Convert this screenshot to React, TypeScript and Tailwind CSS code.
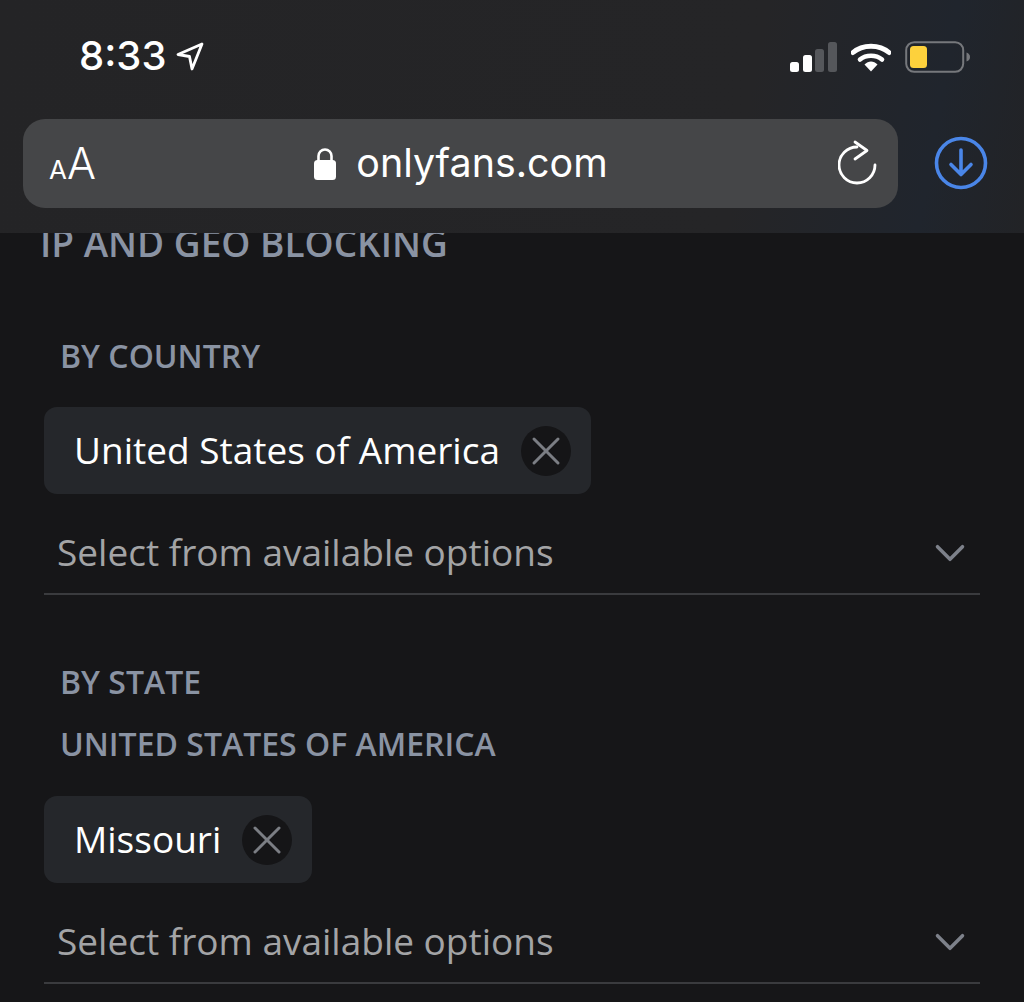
import { ChevronDown, X } from "lucide-react";

const openSans = "font-['Open_Sans',sans-serif]";

function Chip({ label }: { label: string }) {
  return (
    <div className="flex h-[87px] w-fit items-center rounded-[13px] bg-[#25272b] pl-[30px] pr-[20px]">
      <span className="pb-[2px] text-[37px] leading-none text-white">{label}</span>
      <span className="ml-[21px] flex h-[50px] w-[50px] shrink-0 items-center justify-center rounded-full bg-[#151517]">
        <X className="h-[48px] w-[48px] shrink-0 text-[#7b7e84]" strokeWidth={1.5} />
      </span>
    </div>
  );
}

function SelectRow() {
  return (
    <div className="mr-[44px] flex h-[101px] items-center justify-between border-b-2 border-[#3a3b3e] pl-[13px] pr-[5px] pt-[16px]">
      <span className="text-[37px] leading-none text-[#a3a4a6]">Select from available options</span>
      <ChevronDown className="mt-[2px] h-[50px] w-[50px] text-[#7d818a]" strokeWidth={1.7} />
    </div>
  );
}

function StatusIcons() {
  return (
    <div className="flex items-center">
      <svg width="50" height="30" viewBox="0 0 50 30">
        <rect x="0" y="20" width="9" height="10" rx="2.5" fill="#fff" />
        <rect x="13" y="13" width="9" height="17" rx="2.5" fill="#fff" />
        <rect x="25" y="7" width="9" height="23" rx="2.5" fill="#55575b" />
        <rect x="38" y="0" width="9" height="30" rx="2.5" fill="#55575b" />
      </svg>
      <svg className="ml-[11px]" width="40" height="30" viewBox="0 0 40 30">
        <path d="M2 10.5C11.5 2 28.5 2 38 10.5" fill="none" stroke="#fff" strokeWidth="5" strokeLinecap="round" />
        <path d="M9 17.5C15 12.5 25 12.5 31 17.5" fill="none" stroke="#fff" strokeWidth="4.6" strokeLinecap="round" />
        <path d="M13.5 22.5C17.5 18.6 22.5 18.6 26.5 22.5L20 29.5Z" fill="#fff" />
      </svg>
      <svg className="ml-[14px]" width="66" height="32" viewBox="0 0 66 32">
        <rect x="1.2" y="1.2" width="57" height="29.6" rx="8" fill="none" stroke="#76787c" strokeWidth="2" />
        <rect x="5" y="5" width="17" height="22" rx="3.5" fill="#fdd13c" />
        <path d="M61.5 11.5C64 12.5 65 14 65 16C65 18 64 19.5 61.5 20.5Z" fill="#76787c" />
      </svg>
    </div>
  );
}

export default function App() {
  return (
    <div className={`h-[1002px] w-[1024px] overflow-hidden bg-[#161618] ${openSans}`}>
      <header className="relative z-10 flex h-[233px] flex-col bg-[linear-gradient(100deg,#242426_0%,#252527_72%,#20252d_90%,#222326_100%)]">
        <div className="flex h-[119px] items-start justify-between pl-[79px] pr-[53px] pt-[39px]">
          <div className="flex items-center font-['Inter',sans-serif] text-[40px] font-medium leading-[34px] text-white">
            8:33
            <svg className="ml-[8px]" width="30" height="30" viewBox="0 0 30 30">
              <path d="M28 3L4 13.5L15.5 15.5L18 28Z" fill="none" stroke="#fff" strokeWidth="2.8" strokeLinejoin="round" />
            </svg>
          </div>
          <div className="pt-[2px]">
            <StatusIcons />
          </div>
        </div>
        <div className="flex items-start pl-[23px]">
          <div className="relative flex h-[89px] w-[875px] items-center justify-center rounded-[22px] bg-[#454648]">
            <span className="absolute left-[26px] top-[23px] flex items-baseline font-['Inter',sans-serif] leading-none text-white">
              <span className="text-[26px]">A</span>
              <span className="text-[43px] font-light">A</span>
            </span>
            <div className="flex items-center">
              <svg width="24" height="33" viewBox="0 0 24 33">
                <path d="M5.5 15V9a6.5 6.5 0 0 1 13 0v6" fill="none" stroke="#fff" strokeWidth="2.6" />
                <rect x="1" y="13" width="22" height="20" rx="3.5" fill="#fff" />
              </svg>
              <span className="ml-[19px] font-['Inter',sans-serif] text-[39.4px] leading-none text-white">onlyfans.com</span>
            </div>
            <svg className="absolute right-[20px] top-[21px]" width="40" height="48" viewBox="0 0 40 48">
              <path d="M19 7A18 18 0 1 0 37 25" fill="none" stroke="#fff" strokeWidth="2.8" strokeLinecap="round" />
              <path d="M17 2L29 10.5L17 19" fill="none" stroke="#fff" strokeWidth="2.8" strokeLinecap="round" strokeLinejoin="round" />
            </svg>
          </div>
          <svg className="ml-[36px] mt-[17px]" width="54" height="54" viewBox="0 0 54 54">
            <circle cx="27" cy="27" r="24.5" fill="none" stroke="#4a86e8" strokeWidth="3.6" />
            <path d="M27 14V38M17 28.5L27 38.5L37 28.5" fill="none" stroke="#4a86e8" strokeWidth="3.6" strokeLinecap="round" strokeLinejoin="round" />
          </svg>
        </div>
      </header>

      <main className="pl-[44px]">
        <h1 className="ml-[-4px] mt-[-13px] text-[37px] font-semibold leading-[45px] text-[#8a93a3]">IP AND GEO BLOCKING</h1>
        <h2 className="ml-[16px] mt-[71px] text-[32px] font-semibold leading-[40px] text-[#8a93a3]">BY COUNTRY</h2>
        <div className="mt-[31px]">
          <Chip label="United States of America" />
        </div>
        <SelectRow />
        <h2 className="ml-[16px] mt-[67px] text-[32px] font-semibold leading-[40px] text-[#8a93a3]">BY STATE</h2>
        <h2 className="ml-[16px] mt-[22px] text-[32px] font-semibold leading-[40px] text-[#8a93a3]">UNITED STATES OF AMERICA</h2>
        <div className="mt-[32px]">
          <Chip label="Missouri" />
        </div>
        <SelectRow />
      </main>
    </div>
  );
}
